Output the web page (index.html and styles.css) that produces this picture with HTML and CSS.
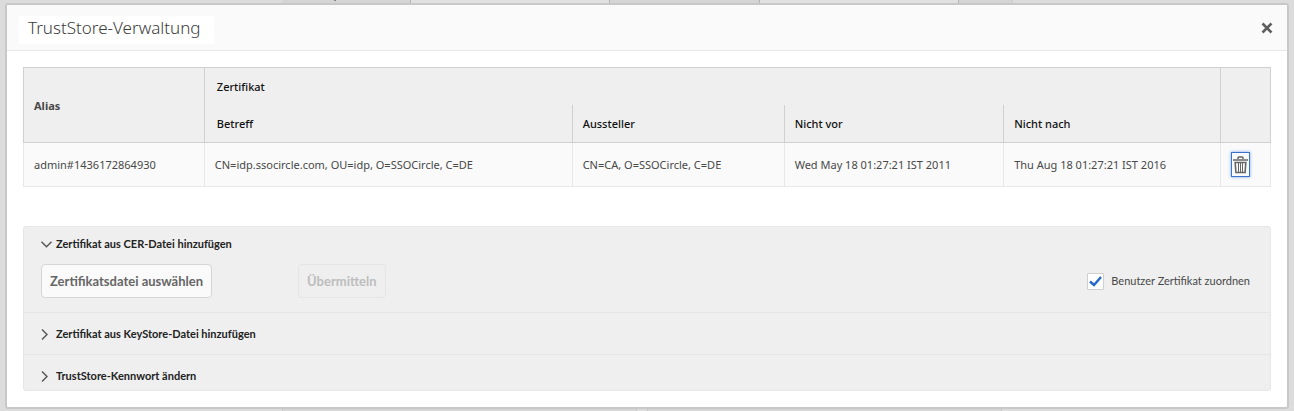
FILE: index.html
```html
<!DOCTYPE html>
<html lang="de">
<head>
<meta charset="utf-8">
<title>TrustStore-Verwaltung</title>
<meta name="viewport" content="width=device-width, initial-scale=1">
<link rel="stylesheet" href="styles.css">
</head>
<body>
<div class="backdrop backdrop-top" aria-hidden="true"><i></i><i class="tab tab-marked"></i><i class="tab-light"></i><i class="tab"></i><i class="tab-light"></i><i class="tab tab-last"></i><i></i></div>
<main class="dialog" role="dialog" aria-labelledby="dialog-title">
  <header class="dialog-header">
    <h1 class="dialog-title" id="dialog-title">TrustStore-Verwaltung</h1>
    <button class="close" type="button" aria-label="Schließen">
      <svg width="12" height="12" viewBox="0 0 12 12"><path d="M1.5 1.5l9 9M10.500 1.500l-9 9" fill="none" stroke="#5e5e5e" stroke-width="2.6"/></svg>
    </button>
  </header>
  <div class="dialog-body">
    <table class="certs">
      <colgroup><col class="c-alias"><col class="c-subject"><col class="c-issuer"><col class="c-from"><col class="c-to"><col class="c-action"></colgroup>
      <thead>
        <tr><th class="alias" rowspan="2">Alias</th><th class="group" colspan="4">Zertifikat</th><th class="action" rowspan="2"></th></tr>
        <tr class="sub"><th class="subject">Betreff</th><th>Aussteller</th><th>Nicht vor</th><th>Nicht nach</th></tr>
      </thead>
      <tbody>
        <tr><td>admin#1436172864930</td><td>CN=idp.ssocircle.com, OU=idp, O=SSOCircle, C=DE</td><td>CN=CA, O=SSOCircle, C=DE</td><td>Wed May 18 01:27:21 IST 2011</td><td>Thu Aug 18 01:27:21 IST 2016</td>
        <td><button class="delete" type="button" aria-label="Löschen">
          <svg width="15" height="21" viewBox="0 0 15 21" fill="none" stroke="#666"><path d="M5 5V3.8Q5 3 5.8 3h3.4q.8 0 .8.8V5" stroke-width="1.5"/><path d="M0 6h15" stroke-width="1.5"/><path d="M2.2 8.500h10.6l-.7 10H2.9z" stroke-width="1.6"/><path d="M5.500 9v9M7.500 9v9M9.500 9v9" stroke-width="1"/></svg>
        </button></td></tr>
      </tbody>
    </table>
    <div class="accordion">
      <section class="panel panel-open">
        <button class="toggle" type="button" aria-expanded="true"><svg width="11" height="11" viewBox="0 0 11 11"><path d="M.5 2.8l5 5 5-5" fill="none" stroke="#555" stroke-width="1.4"/></svg>Zertifikat aus CER-Datei hinzufügen</button>
        <div class="form">
          <button class="btn" type="button">Zertifikatsdatei auswählen</button>
          <button class="btn btn-submit" type="button" disabled>Übermitteln</button>
          <label class="check"><input type="checkbox" checked>Benutzer Zertifikat zuordnen</label>
        </div>
      </section>
      <section class="panel"><button class="toggle" type="button" aria-expanded="false"><svg width="11" height="11" viewBox="0 0 11 11"><path d="M1 .5l5 5-5 5" fill="none" stroke="#555" stroke-width="1.4"/></svg>Zertifikat aus KeyStore-Datei hinzufügen</button></section>
      <section class="panel"><button class="toggle" type="button" aria-expanded="false"><svg width="11" height="11" viewBox="0 0 11 11"><path d="M1 .5l5 5-5 5" fill="none" stroke="#555" stroke-width="1.4"/></svg>TrustStore-Kennwort ändern</button></section>
    </div>
  </div>
</main>
<div class="backdrop backdrop-bottom" aria-hidden="true"><i></i><i class="tab"></i><i></i><i class="tab"></i><i></i></div>
</body>
</html>
```
FILE: styles.css
```css
* { box-sizing: border-box; }
body {
  margin: 0;
  background: #dcdcdc;
  color: #484848;
  font-family: Lato, "Noto Sans", sans-serif;
  font-size: 11px;
  line-height: 16px;
}
button { font: inherit; color: inherit; padding: 0; border: 0; background: none; cursor: pointer; }
svg { display: block; }

.backdrop { display: grid; }
.backdrop-top { height: 3px; grid-template-columns: 282fr 129fr 199fr 150fr 199fr 54fr 281fr; }
.backdrop-bottom { height: 2px; grid-template-columns: 282fr 355fr 10fr 355fr 292fr; }
.tab { background: #d5d5d5; }
.backdrop-top .tab { border-right: 1px solid #b4b4b4; }
.backdrop-top .tab-last { border-right-color: #cdcdcd; }
.tab-light { background: #e1e1e1; border-right: 1px solid #b4b4b4; }
.tab-marked::before { content: ""; display: block; width: 2px; height: 1px; margin-left: 52px; background: #8b8179; }
.backdrop-bottom .tab { border: 0 solid #c8c8c8; border-width: 0 1px; }

.dialog { margin: 0 5px; border: 2px solid #c8c8c8; border-radius: 3px; background: #fff; }
.dialog-header {
  display: flex;
  justify-content: space-between;
  align-items: center;
  padding: 11px 14px 6px 12px;
  background: #fafafa;
  border-bottom: 1px solid #e8e8e8;
}
.close { margin-bottom: 4px; }
.dialog-title {
  margin: 0;
  padding: 0 13px 4px 9px;
  background: #fff;
  color: #3c3c3c;
  font-family: "Noto Sans", "Open Sans", sans-serif;
  font-size: 17px;
  font-weight: 300;
  line-height: 24px;
}
.dialog-body { padding: 16px; }

.certs { width: 100%; table-layout: fixed; border-collapse: collapse; font-family: "Noto Sans", "Open Sans", sans-serif; }
.c-alias { width: 14.5%; }
.c-subject { width: 29.5%; }
.c-issuer { width: 17%; }
.c-from { width: 17.6%; }
.c-to { width: 17.4%; }
.certs th { height: 38px; padding: 2px 10px 0; background: #efefef; color: #111; font-weight: 500; text-align: left; }
.certs .alias { font-weight: 700; color: #484848; border: 1px solid #d0d0d0; }
.certs .action { border: 1px solid #d0d0d0; }
.certs .group { height: 37px; padding-left: 12px; border-top: 1px solid #d0d0d0; }
.certs .sub th { border-left: 1px solid #d0d0d0; border-bottom: 1px solid #d0d0d0; }
.certs .sub .subject { padding-left: 12px; }
.certs td { height: 44px; padding: 0 10px; background: #fafafa; border: 1px solid #e8e8e8; border-top-color: #d0d0d0; white-space: nowrap; }
.delete { display: block; padding: 1px; border: 1px solid #3a73c9; box-shadow: 0 0 3px #78a5ed; }

.accordion { margin-top: 39px; background: #efefef; border: 1px solid #e6e6e6; border-radius: 3px; }
.panel { padding: 13px 17px 12px; }
.panel + .panel { border-top: 1px solid #e6e6e6; }
.panel:last-child { padding-bottom: 6px; }
.panel-open { padding: 9px 20px 14px 17px; }
.toggle { display: flex; align-items: center; gap: 4px; color: #222; font-weight: 700; }
.form { display: flex; align-items: center; margin-top: 12px; }
.btn {
  height: 34px;
  padding: 0 8px;
  border: 1px solid #d5d5d5;
  border-radius: 4px;
  background: #fafafa;
  color: #666;
  font-size: 13px;
  font-weight: 700;
}
.btn-submit { margin-left: 86px; border-color: #e5e5e5; background: #efefef; color: #bdbdbd; cursor: default; }
.check { display: flex; align-items: center; gap: 7px; margin-left: auto; }
.check input {
  appearance: none;
  width: 17px;
  height: 17px;
  margin: 0;
  border: 1px solid #cfcfcf;
  border-radius: 1px;
  background: #fff;
}
.check input:checked {
  background: #fff url("data:image/svg+xml,%3Csvg xmlns='http://www.w3.org/2000/svg' viewBox='0 0 15 15'%3E%3Cpath d='M2 7.5l4 3.5 7-8' fill='none' stroke='%232468ca' stroke-width='2.4'/%3E%3C/svg%3E");
}
```
